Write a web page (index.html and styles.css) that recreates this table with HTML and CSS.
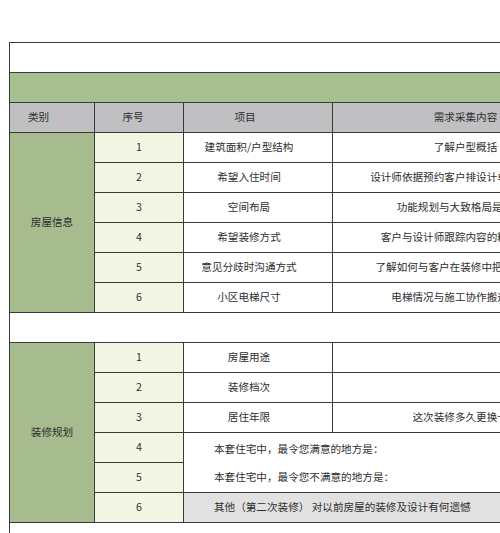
FILE: index.html
```html
<!DOCTYPE html>
<html lang="zh">
<head>
<meta charset="utf-8">
<title>需求采集表</title>
<link rel="stylesheet" href="styles.css">
</head>
<body>
<table class="sheet">
  <colgroup>
    <col class="c-cat">
    <col class="c-seq">
    <col class="c-item">
    <col class="c-need">
  </colgroup>
  <tbody>
    <tr class="row-blank"><td colspan="4"></td></tr>
    <tr class="row-title"><td colspan="4"></td></tr>
    <tr class="row-head">
      <td class="h-cat">类别</td>
      <td class="h-seq">序号</td>
      <td class="h-item">项目</td>
      <td class="h-need">需求采集内容</td>
    </tr>
    <tr>
      <td class="cat" rowspan="6">房屋信息</td>
      <td class="seq">1</td>
      <td class="item">建筑面积/户型结构</td>
      <td class="need">了解户型概括</td>
    </tr>
    <tr>
      <td class="seq">2</td>
      <td class="item">希望入住时间</td>
      <td class="need">设计师依据预约客户排设计单与施工计划</td>
    </tr>
    <tr>
      <td class="seq">3</td>
      <td class="item">空间布局</td>
      <td class="need">功能规划与大致格局是否合理</td>
    </tr>
    <tr>
      <td class="seq">4</td>
      <td class="item">希望装修方式</td>
      <td class="need">客户与设计师跟踪内容的精准与完整</td>
    </tr>
    <tr>
      <td class="seq">5</td>
      <td class="item">意见分歧时沟通方式</td>
      <td class="need">了解如何与客户在装修中把握沟通尺度</td>
    </tr>
    <tr>
      <td class="seq">6</td>
      <td class="item">小区电梯尺寸</td>
      <td class="need">电梯情况与施工协作搬运的问题</td>
    </tr>
    <tr class="row-blank"><td colspan="4"></td></tr>
    <tr>
      <td class="cat" rowspan="6">装修规划</td>
      <td class="seq">1</td>
      <td class="item">房屋用途</td>
      <td class="need"></td>
    </tr>
    <tr>
      <td class="seq">2</td>
      <td class="item">装修档次</td>
      <td class="need"></td>
    </tr>
    <tr>
      <td class="seq">3</td>
      <td class="item">居住年限</td>
      <td class="need">这次装修多久更换一次</td>
    </tr>
    <tr>
      <td class="seq">4</td>
      <td class="wide open-bottom" colspan="2">本套住宅中，最令您满意的地方是：</td>
    </tr>
    <tr>
      <td class="seq">5</td>
      <td class="wide open-top" colspan="2">本套住宅中，最令您不满意的地方是：</td>
    </tr>
    <tr>
      <td class="seq">6</td>
      <td class="wide shaded" colspan="2">其他（第二次装修） 对以前房屋的装修及设计有何遗憾</td>
    </tr>
    <tr class="row-blank"><td colspan="4"></td></tr>
  </tbody>
</table>
</body>
</html>
```

FILE: styles.css
```css
html, body {
  margin: 0;
  padding: 0;
  background: #ffffff;
  overflow: hidden;
}

.sheet {
  margin: 42px 0 0 9px;
  border-collapse: collapse;
  table-layout: fixed;
  width: 589px;
  font-family: "Noto Sans CJK SC", "Noto Sans", sans-serif;
  font-size: 10.6px;
  color: #2e2e2e;
}

.c-cat { width: 85px; }
.c-seq { width: 89px; }
.c-item { width: 149px; }
.c-need { width: 266px; }

.sheet tr {
  height: 30px;
}

.sheet td {
  border: 1px solid #3a3a3a;
  padding: 0;
  text-align: center;
  vertical-align: middle;
  white-space: nowrap;
  overflow: hidden;
  line-height: 1;
}

.sheet .row-blank td {
  background: #ffffff;
}

.sheet .row-title td {
  background: #a8bf90;
}

.sheet .row-head td {
  background: #c0c0c3;
}

.sheet td.h-cat {
  text-align: left;
  padding-left: 18px;
}

.sheet td.h-seq {
  padding-right: 12px;
}

.sheet td.h-item {
  padding-right: 26px;
}

.sheet td.cat {
  background: #a6bc8e;
}

.sheet td.seq {
  background: #f4f6e5;
}

.sheet td.item {
  background: #ffffff;
  padding-right: 18px;
}

.sheet td.need {
  background: #ffffff;
}

.sheet td.wide {
  text-align: left;
  padding-left: 30px;
  background: #ffffff;
}

.sheet td.open-bottom {
  border-bottom-color: transparent;
  padding-top: 3px;
}

.sheet td.open-top {
  border-top-color: transparent;
}

.sheet td.shaded {
  background: #e1e1e1;
}
```
